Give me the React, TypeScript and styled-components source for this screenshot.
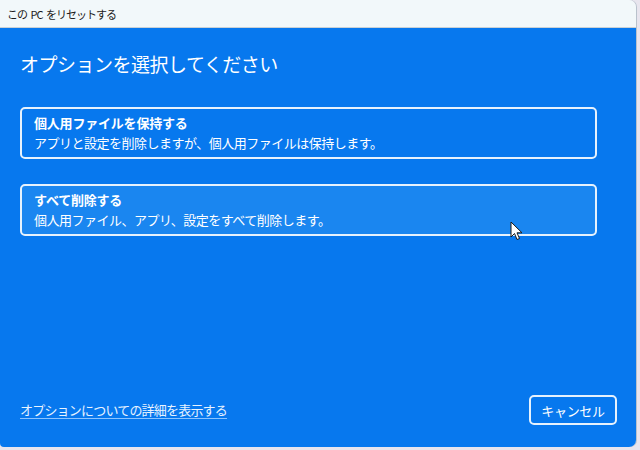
import React from "react";
import styled, { createGlobalStyle } from "styled-components";

const Global = createGlobalStyle`
  html, body { margin: 0; padding: 0; }
  body {
    width: 640px;
    height: 450px;
    overflow: hidden;
    background: #e8e5ee;
    font-family: "Noto Sans CJK JP", "Noto Sans", sans-serif;
  }
`;

const Window = styled.div`
  position: relative;
  width: 636px;
  height: 447px;
  display: flex;
  flex-direction: column;
  border-radius: 0 7px 7px 4px;
  overflow: hidden;
  box-shadow: 1px 0 0 #b9c2cc;
`;

const TitleBar = styled.div`
  height: 27px;
  flex: none;
  display: flex;
  align-items: center;
  padding-left: 7px;
  background: #f2f8fa;
  border-bottom: 1px solid #c9d1d6;
  color: #1b1b1b;
  font-size: 11px;
  letter-spacing: -1px;
  word-spacing: 2px;
`;

const Body = styled.div`
  flex: 1;
  display: flex;
  flex-direction: column;
  background: #0778ee;
  padding: 23px 19px 22px 20px;
`;

const Heading = styled.h1`
  margin: 0 0 30px;
  font-size: 19px;
  line-height: 26px;
  font-weight: 400;
  color: #ffffff;
  letter-spacing: -0.5px;
`;

const Options = styled.div`
  display: flex;
  flex-direction: column;
  gap: 25px;
  margin-right: 20px;
`;

const Card = styled.div<{ $hover?: boolean }>`
  border: 2px solid #e6f2fd;
  border-radius: 5px;
  background: ${(p) => (p.$hover ? "#1a86f0" : "#0778ee")};
  padding: 4px 14px 4px 12px;
  display: flex;
  flex-direction: column;
  color: #ffffff;
`;

const CardTitle = styled.div`
  font-size: 13px;
  line-height: 20px;
  font-weight: 700;
  letter-spacing: -0.2px;
`;

const CardText = styled.div`
  font-size: 13px;
  line-height: 20px;
  font-weight: 400;
  letter-spacing: -0.5px;
`;

const Spacer = styled.div`
  flex: 1;
`;

const Footer = styled.div`
  display: flex;
  align-items: center;
  justify-content: space-between;
`;

const MoreLink = styled.a`
  font-size: 13px;
  line-height: 20px;
  color: #e8f3ff;
  text-decoration: underline;
  text-decoration-color: #8cc4ff;
  text-underline-offset: 3px;
  letter-spacing: -0.8px;
  cursor: pointer;
`;

const CancelButton = styled.button`
  width: 88px;
  height: 30px;
  border: 2px solid #e6f2fd;
  border-radius: 5px;
  background: #0778ee;
  color: #ffffff;
  font-family: inherit;
  font-size: 13px;
  letter-spacing: -0.3px;
  padding: 0;
`;

const Pointer = styled.svg`
  position: absolute;
  left: 510px;
  top: 221px;
  width: 13px;
  height: 20px;
  pointer-events: none;
`;

export default function App() {
  return (
    <>
      <Global />
      <Window>
        <TitleBar>この PC をリセットする</TitleBar>
        <Body>
          <Heading>オプションを選択してください</Heading>
          <Options>
            <Card>
              <CardTitle>個人用ファイルを保持する</CardTitle>
              <CardText>アプリと設定を削除しますが、個人用ファイルは保持します。</CardText>
            </Card>
            <Card $hover>
              <CardTitle>すべて削除する</CardTitle>
              <CardText>個人用ファイル、アプリ、設定をすべて削除します。</CardText>
            </Card>
          </Options>
          <Spacer />
          <Footer>
            <MoreLink>オプションについての詳細を表示する</MoreLink>
            <CancelButton>キャンセル</CancelButton>
          </Footer>
        </Body>
        <Pointer viewBox="0 0 13 20">
          <path
            d="M1 1 L1 16 L4.5 12.5 L7 18.5 L9.5 17.5 L7 11.8 L12 11.8 Z"
            fill="#ffffff"
            stroke="#1a1a1a"
            strokeWidth="1"
            strokeLinejoin="round"
          />
        </Pointer>
      </Window>
    </>
  );
}
